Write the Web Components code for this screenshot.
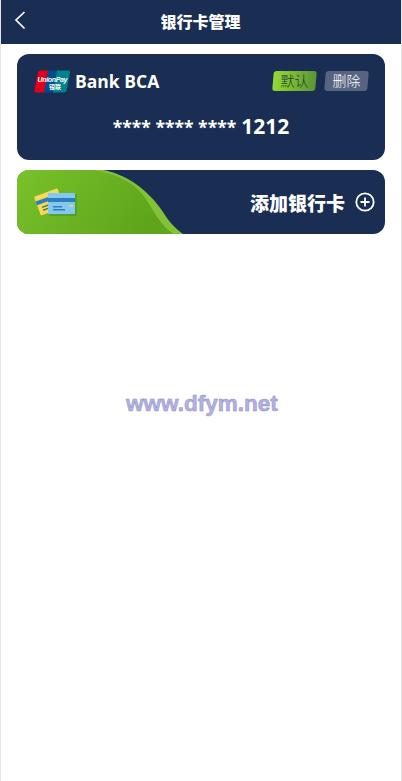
<!DOCTYPE html>
<html lang="zh">
<head>
<meta charset="utf-8">
<title>银行卡管理</title>
<style>
  html, body { margin: 0; height: 100%; background: #fff; }
  body { font-family: "Open Sans", "Noto Sans CJK SC", sans-serif; }
</style>
</head>
<body>
<bank-page>
  <top-bar>银行卡管理</top-bar>
  <bank-card name="Bank BCA" stars="**** **** ****" last="1212"></bank-card>
  <add-card>添加银行卡</add-card>
  <water-mark>www.dfym.net</water-mark>
</bank-page>

<script>
class BankPage extends HTMLElement {
  connectedCallback() {
    this.attachShadow({ mode: 'open' });
    this.shadowRoot.innerHTML = `
      <style>
        :host {
          display: flex;
          flex-direction: column;
          position: relative;
          box-sizing: border-box;
          width: 402px;
          height: 781px;
          border-left: 1px solid #e4e4e4;
          border-right: 1px solid #e4e4e4;
          overflow: hidden;
        }
      </style>
      <slot></slot>
    `;
  }
}
customElements.define('bank-page', BankPage);

class TopBar extends HTMLElement {
  connectedCallback() {
    this.attachShadow({ mode: 'open' });
    this.shadowRoot.innerHTML = `
      <style>
        :host {
          display: grid;
          grid-template-columns: 40px 1fr 40px;
          align-items: center;
          height: 44px;
          background: #192e52;
          color: #fff;
          font: 900 16px "Noto Sans CJK SC", sans-serif;
        }
        svg { display: block; margin: 0 0 4px 12px; }
        .title { text-align: center; padding-bottom: 3px; margin-left: -1px; }
      </style>
      <svg width="14" height="20" viewBox="0 0 14 20" fill="none" stroke="#fff" stroke-width="1.7">
        <path d="M11.5 2 L3 10 L11.5 18.500"/>
      </svg>
      <div class="title"><slot></slot></div>
      <div></div>
    `;
  }
}
customElements.define('top-bar', TopBar);

class BankCard extends HTMLElement {
  connectedCallback() {
    this.attachShadow({ mode: 'open' });
    this.shadowRoot.innerHTML = `
      <style>
        :host {
          display: block;
          box-sizing: border-box;
          height: 106px;
          margin: 10px 16px 10px 16px;
          padding: 16px 17px 0 17px;
          background: #192e52;
          border-radius: 12px;
          color: #fff;
        }
        .row { display: flex; align-items: center; height: 23px; }
        .logo { display: block; flex: none; }
        .name {
          margin: -2px 0 0 4px;
          font: 700 17.500px "Open Sans", sans-serif;
          flex: 1;
        }
        .tag {
          width: 43px;
          height: 20px;
          margin: -1px 0 0 9px;
          border-radius: 3px;
          transform: skewX(-5deg);
          font: 300 14px/19px "Noto Sans CJK SC", sans-serif;
          text-align: center;
        }
        .tag span { display: block; transform: skewX(5deg); }
        .on { background: linear-gradient(90deg, #95d936, #5b9436); color: #1b3a2a; }
        .off { background: #57647f; color: #fff; }
        .num {
          margin-top: 20px;
          display: flex;
          justify-content: center;
          align-items: baseline;
          gap: 5px;
          font: 700 20px/27px "Open Sans", sans-serif;
        }
        .stars { font-size: 17.500px; }
        .last { font-size: 21px; }
      </style>
      <div class="row">
        <svg class="logo" width="37" height="23" viewBox="0 0 37 23">
          <path d="M6 0.500 H15 L11 22.500 H2 Q0 22.500 0.500 20.500 L4 2 Q4.400 0.500 6 0.500Z" fill="#e2001a"/>
          <path d="M14 0.500 H25 L21 22.500 H10Z" fill="#004a8f"/>
          <path d="M23 0.500 H34.500 Q36.500 0.500 36 2.500 L32.500 20.500 Q32 22.500 30 22.500 H19Z" fill="#00838a"/>
          <text x="3.500" y="11.500" font-family="Liberation Sans, sans-serif" font-size="7" font-weight="700" font-style="italic" fill="#fff" textLength="30">UnionPay</text>
          <text x="15" y="18.500" font-family="Noto Sans CJK SC, sans-serif" font-size="6" font-weight="700" fill="#fff">银联</text>
        </svg>
        <div class="name">${this.getAttribute('name')}</div>
        <div class="tag on"><span>默认</span></div>
        <div class="tag off"><span>删除</span></div>
      </div>
      <div class="num"><span class="stars">${this.getAttribute('stars')}</span><span class="last">${this.getAttribute('last')}</span></div>
    `;
  }
}
customElements.define('bank-card', BankCard);

class AddCard extends HTMLElement {
  connectedCallback() {
    this.attachShadow({ mode: 'open' });
    this.shadowRoot.innerHTML = `
      <style>
        :host {
          display: flex;
          align-items: center;
          justify-content: flex-end;
          position: relative;
          box-sizing: border-box;
          height: 64px;
          margin: 0 16px;
          padding-right: 10px;
          background: #192e52;
          border-radius: 12px;
          overflow: hidden;
          color: #fff;
          font: 900 19px "Noto Sans CJK SC", sans-serif;
        }
        .bg { position: absolute; left: 0; top: 0; }
        .txt { position: relative; }
        .plus { position: relative; display: block; margin: 0 0 1px 10px; }
        .ico {
          position: absolute;
          left: 17px;
          top: 17px;
        }
      </style>
      <svg class="bg" width="170" height="64" viewBox="0 0 170 64">
        <defs>
          <linearGradient id="g" x1="0" x2="1" y1="0" y2="0.300">
            <stop offset="0" stop-color="#78c22b"/>
            <stop offset="1" stop-color="#5fa51b"/>
          </linearGradient>
        </defs>
        <path d="M0 0 H86 C108 4 130 18 146 42 C152 52 158 58 166 64 H0Z" fill="#82c236"/>
        <path d="M0 0 H76 C100 4 116 12 126 25 C134 35 140 52 156 64 H0Z" fill="url(#g)"/>
      </svg>
      <svg class="ico" width="44" height="34" viewBox="0 0 44 34">
        <g transform="rotate(-20 15 16)">
          <rect x="3" y="5" width="25" height="20" rx="1" fill="#f7d85c"/>
          <rect x="3" y="10" width="25" height="4" fill="#2a80b9"/>
          <rect x="7" y="17" width="9" height="1.500" fill="#4f7a4a"/>
          <rect x="7" y="20" width="6" height="1.500" fill="#4f7a4a"/>
        </g>
        <rect x="15" y="7" width="28" height="22" rx="1" fill="#3f8f2c" opacity=".5"/>
        <rect x="14" y="6" width="27" height="21" rx="1" fill="#84c8f2"/>
        <rect x="14" y="11" width="27" height="4" fill="#2a80b9"/>
        <rect x="19" y="19" width="9" height="1.500" fill="#2a80b9"/>
        <rect x="19" y="22" width="12" height="1.500" fill="#2a80b9"/>
        <rect x="35" y="18" width="4" height="1.500" fill="#e7d87a"/>
      </svg>
      <div class="txt"><slot></slot></div>
      <svg class="plus" width="20" height="20" viewBox="0 0 20 20" fill="none" stroke="#fff" stroke-width="1.800">
        <circle cx="10" cy="10" r="8.700"/>
        <path d="M10 5.500 V14.500 M5.500 10 H14.500"/>
      </svg>
    `;
  }
}
customElements.define('add-card', AddCard);

class WaterMark extends HTMLElement {
  connectedCallback() {
    this.attachShadow({ mode: 'open' });
    this.shadowRoot.innerHTML = `
      <style>
        :host {
          position: absolute;
          left: 125px;
          top: 391px;
          color: #b3b3e2;
          font: 700 22.500px/26px "Liberation Sans", sans-serif;
          -webkit-text-stroke: 0.5px #8a8ac4;
        }
      </style>
      <slot></slot>
    `;
  }
}
customElements.define('water-mark', WaterMark);
</script>
</body>
</html>
